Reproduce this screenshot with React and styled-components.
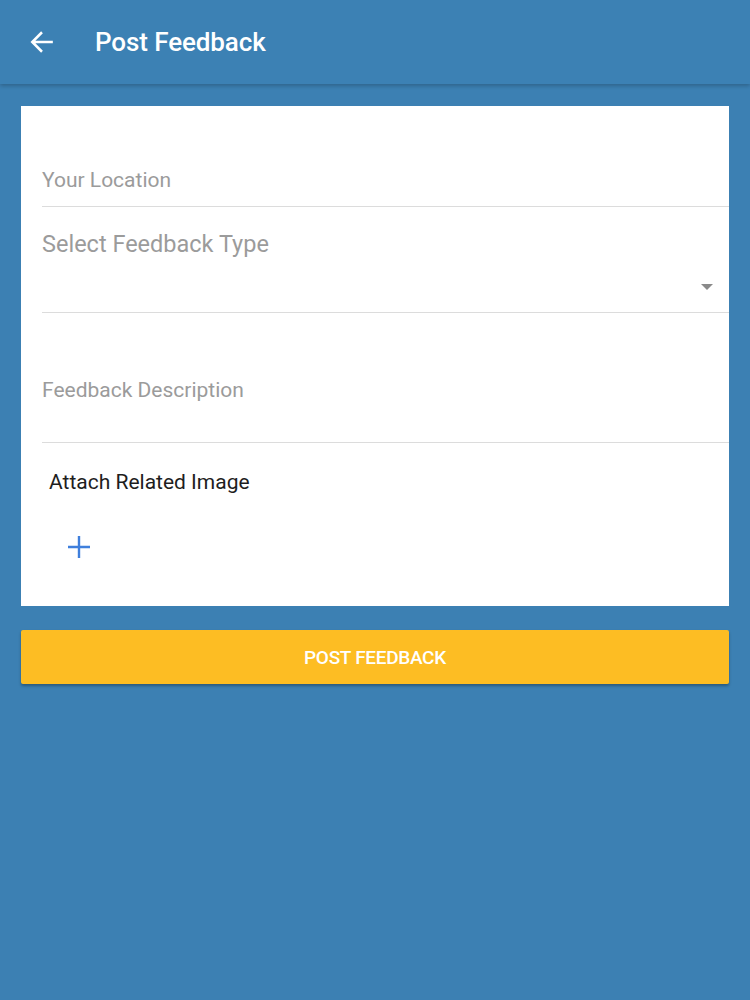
import React from 'react';
import styled, { createGlobalStyle } from 'styled-components';

const GlobalStyle = createGlobalStyle`
  html, body {
    margin: 0;
    padding: 0;
    background: #3c80b3;
  }
  body {
    font-family: Roboto, "Noto Sans", "Liberation Sans", sans-serif;
  }
`;

const Page = styled.div`
  min-height: 1000px;
  background: #3c80b3;
`;

const Header = styled.header`
  height: 84px;
  display: flex;
  align-items: center;
  padding: 0 0 0 27px;
  box-sizing: border-box;
  background: #3c81b4;
  box-shadow: 0 2px 4px rgba(0, 0, 0, 0.22);
`;

const BackButton = styled.button`
  width: 30px;
  height: 30px;
  padding: 0;
  border: 0;
  background: none;
  display: flex;
  align-items: center;
  justify-content: center;
  margin-right: 38px;
`;

const Title = styled.h1`
  margin: 0;
  color: #fff;
  font-size: 26px;
  font-weight: 500;
  letter-spacing: -0.1px;
`;

const Content = styled.main`
  padding: 22px 21px;
  display: flex;
  flex-direction: column;
  gap: 24px;
`;

const Card = styled.section`
  background: #fff;
  padding: 54px 0 0 21px;
  height: 500px;
  box-sizing: border-box;
`;

const Field = styled.div`
  position: relative;
  height: ${p => p.height}px;
  border-bottom: 1.5px solid #dcdcdc;
  display: flex;
  align-items: ${p => (p.top ? 'flex-start' : 'flex-end')};
  padding-bottom: ${p => p.pb || 0}px;
  padding-top: ${p => p.pt || 0}px;
  box-sizing: border-box;
`;

const Placeholder = styled.span`
  color: #9b9b9b;
  font-size: ${p => p.size || 21}px;
`;

const Arrow = styled.span`
  position: absolute;
  right: 16px;
  bottom: 22px;
  width: 0;
  height: 0;
  border-left: 6px solid transparent;
  border-right: 6px solid transparent;
  border-top: 6px solid #8a8a8a;
`;

const AttachLabel = styled.div`
  color: #1e1e1e;
  font-size: 21px;
  padding: 27px 0 0 7px;
`;

const AddButton = styled.button`
  margin: 40px 0 0 24px;
  width: 26px;
  height: 26px;
  padding: 0;
  border: 0;
  background: none;
  display: flex;
  align-items: center;
  justify-content: center;
`;

const PostButton = styled.button`
  height: 54px;
  border: 0;
  border-radius: 2px;
  background: #fdbd23;
  color: #fff;
  font-family: Roboto, "Noto Sans", sans-serif;
  font-size: 19px;
  font-weight: 500;
  letter-spacing: -0.3px;
  box-shadow: 0 2px 3px rgba(0, 0, 0, 0.3);
`;

export default function App() {
  return (
    <Page>
      <GlobalStyle />
      <Header>
        <BackButton aria-label="back">
          <svg width="26" height="26" viewBox="0 0 24 24">
            <path d="M22 12H3M12 3L3 12l9 9" fill="none" stroke="#fff" strokeWidth="2.3" />
          </svg>
        </BackButton>
        <Title>Post Feedback</Title>
      </Header>
      <Content>
        <Card>
          <Field height={47} pb={14}>
            <Placeholder>Your Location</Placeholder>
          </Field>
          <Field height={106} pt={23} top>
            <Placeholder size={23.5}>Select Feedback Type</Placeholder>
            <Arrow />
          </Field>
          <Field height={130} pb={40}>
            <Placeholder>Feedback Description</Placeholder>
          </Field>
          <AttachLabel>Attach Related Image</AttachLabel>
          <AddButton aria-label="add image">
            <svg width="24" height="24" viewBox="0 0 24 24">
              <path d="M12 1v22M1 12h22" fill="none" stroke="#3f7fdc" strokeWidth="2.4" />
            </svg>
          </AddButton>
        </Card>
        <PostButton>POST FEEDBACK</PostButton>
      </Content>
    </Page>
  );
}
